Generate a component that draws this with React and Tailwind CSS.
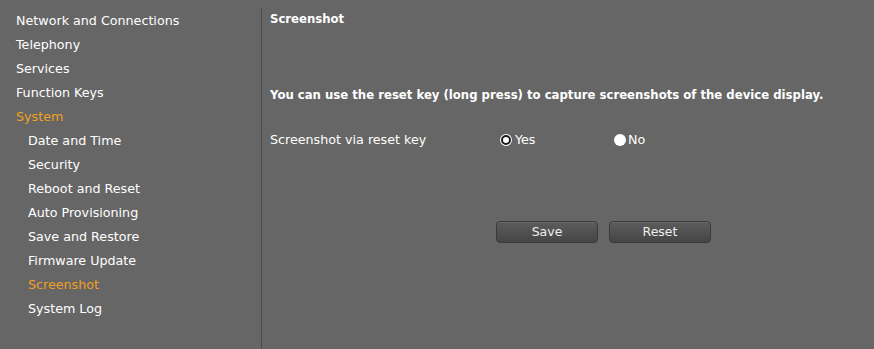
const menu = [
  { label: "Network and Connections" },
  { label: "Telephony" },
  { label: "Services" },
  { label: "Function Keys" },
  { label: "System", active: true },
  { label: "Date and Time", sub: true },
  { label: "Security", sub: true },
  { label: "Reboot and Reset", sub: true },
  { label: "Auto Provisioning", sub: true },
  { label: "Save and Restore", sub: true },
  { label: "Firmware Update", sub: true },
  { label: "Screenshot", sub: true, active: true },
  { label: "System Log", sub: true },
];

function Radio({ checked }) {
  return (
    <span className="w-[12px] h-[12px] rounded-full bg-white flex items-center justify-center">
      {checked && <span className="w-[10px] h-[10px] rounded-full border-[2.5px] border-[#1a1a1a] bg-white" />}
    </span>
  );
}

function Button({ children }) {
  return (
    <button className="w-[102px] h-[22px] rounded-[4px] border border-[#3a3a3a] bg-gradient-to-b from-[#5c5c5c] to-[#464646] text-[#eee] text-[12.5px] shadow-[inset_0_1px_0_#6a6a6a]">
      {children}
    </button>
  );
}

export default function App() {
  return (
    <div className="w-[874px] h-[349px] bg-[#666666] flex font-['DejaVu_Sans',sans-serif] text-[12.7px] text-white overflow-hidden">
      <nav className="w-[261px] shrink-0 pt-[9px] flex flex-col">
        {menu.map((m) => (
          <div
            key={m.label + (m.sub ? "-sub" : "")}
            className={`h-[24px] flex items-center ${m.sub ? "pl-[28px]" : "pl-[16px]"} ${m.active ? "text-[#f0a020]" : "text-white"}`}
          >
            {m.label}
          </div>
        ))}
      </nav>
      <div className="w-px bg-[#4a4a4a] mt-[8px] shrink-0" />
      <main className="flex-1 pl-[8px] pt-[11px]">
        <h1 className="font-bold text-[11.7px] h-[16px] leading-[16px]">Screenshot</h1>
        <p className="font-bold text-[11.7px] mt-[60px] leading-[16px]">
          You can use the reset key (long press) to capture screenshots of the device display.
        </p>
        <div className="flex items-center mt-[29px] h-[16px]">
          <span className="w-[230px]">Screenshot via reset key</span>
          <label className="flex items-center gap-[3px] w-[114px]">
            <Radio checked />
            Yes
          </label>
          <label className="flex items-center gap-[2px]">
            <Radio />
            No
          </label>
        </div>
        <div className="flex gap-[11px] mt-[73px] pl-[226px]">
          <Button>Save</Button>
          <Button>Reset</Button>
        </div>
      </main>
    </div>
  );
}
